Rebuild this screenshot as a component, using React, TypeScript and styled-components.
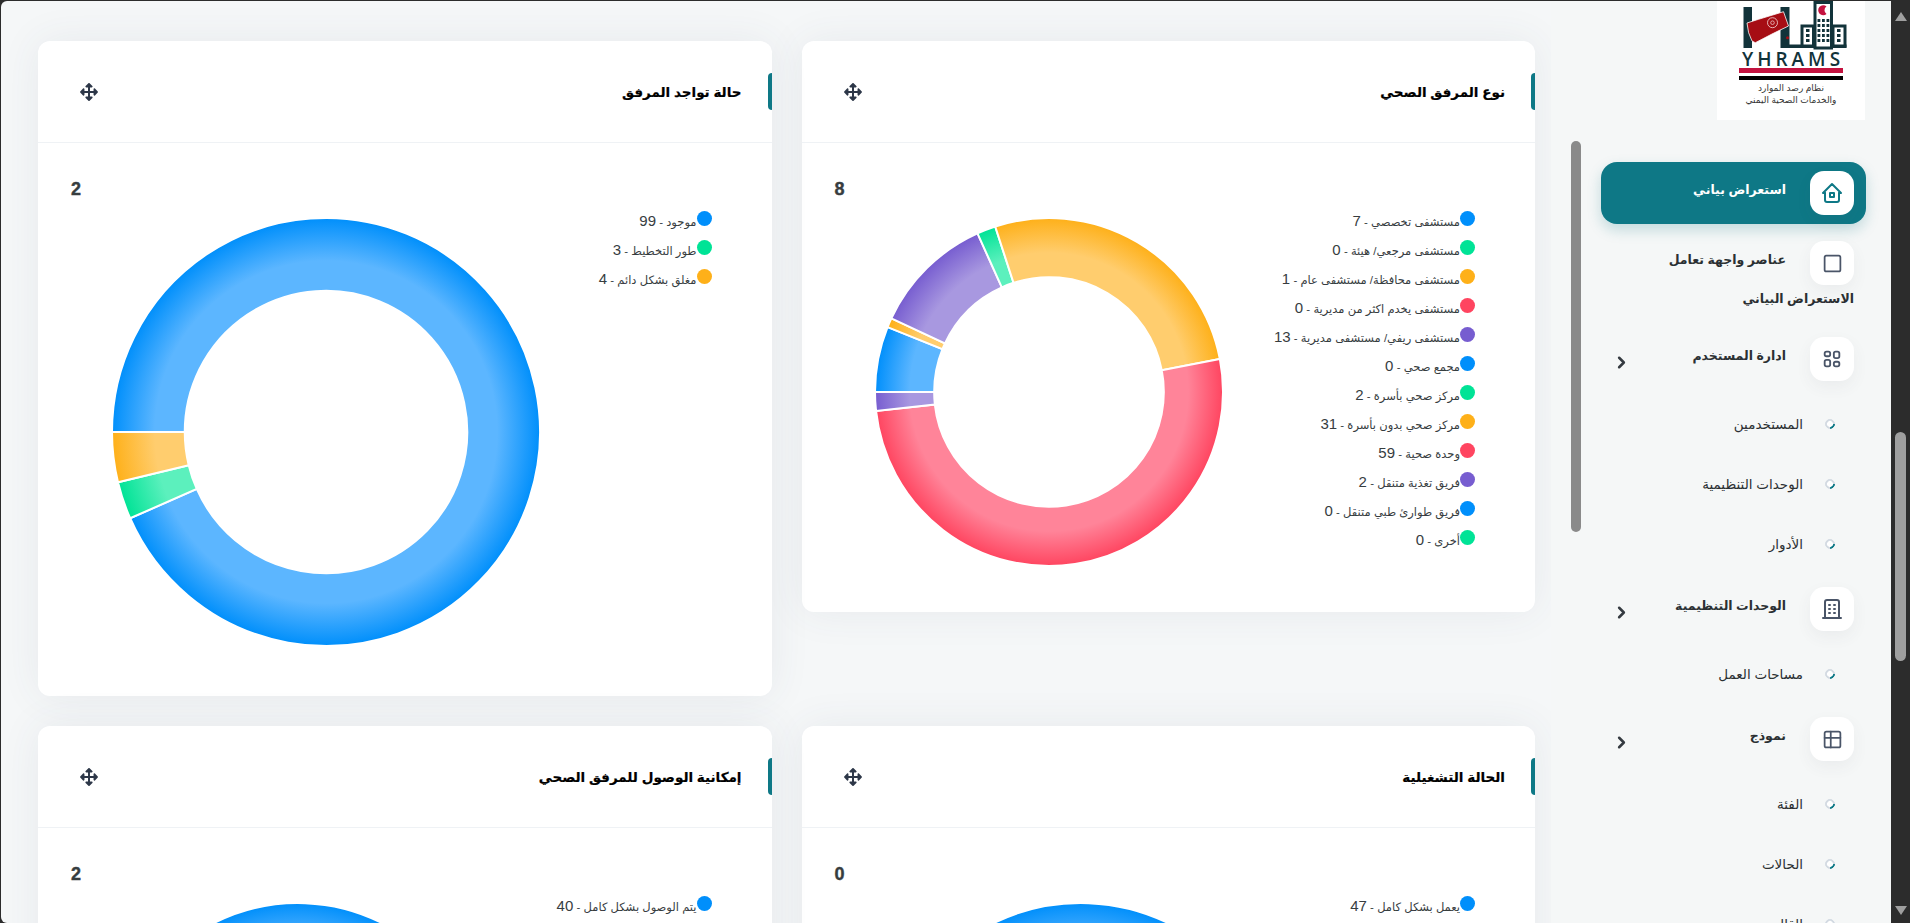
import React from "react";
import styled, { createGlobalStyle } from "styled-components";
import { FaArrowsAlt } from "react-icons/fa";
import { TbBuilding, TbChevronRight, TbHome2, TbLayout2, TbSquare, TbTable } from "react-icons/tb";

const GlobalStyle = createGlobalStyle`
  html, body { margin: 0; height: 100%; overflow: hidden; background: #2c2c2c; }
  body { font-family: "Liberation Sans", "DejaVu Sans", sans-serif; }
  * { box-sizing: border-box; }
`;

const COLORS: Record<string, { base: string; light: string }> = {
  blue: { base: "#008ffb", light: "#5cb6ff" },
  green: { base: "#00e396", light: "#5cf0bd" },
  orange: { base: "#feb019", light: "#ffcd6e" },
  red: { base: "#ff4560", light: "#ff8499" },
  purple: { base: "#775dd0", light: "#a898e0" },
};
const CYCLE = ["blue", "green", "orange", "red", "purple"];

type Entry = { label: string; value: number };
type ChartCard = { title: string; count: string; radius: number; inset: number; tail: number; entries: Entry[] };

const TYPE_ENTRIES: Entry[] = [
  { label: "مستشفى تخصصي", value: 7 },
  { label: "مستشفى مرجعي/ هيئة", value: 0 },
  { label: "مستشفى محافظة/ مستشفى عام", value: 1 },
  { label: "مستشفى يخدم اكثر من مديرية", value: 0 },
  { label: "مستشفى ريفي/ مستشفى مديرية", value: 13 },
  { label: "مجمع صحي", value: 0 },
  { label: "مركز صحي بأسرة", value: 2 },
  { label: "مركز صحي بدون بأسرة", value: 31 },
  { label: "وحدة صحية", value: 59 },
  { label: "فريق تغذية متنقل", value: 2 },
  { label: "فريق طوارئ طبي متنقل", value: 0 },
  { label: "أخرى", value: 0 },
];

const CARDS: ChartCard[] = [
  { title: "نوع المرفق الصحي", count: "8", radius: 174, inset: 39, tail: 45, entries: TYPE_ENTRIES },
  {
    title: "حالة تواجد المرفق",
    count: "2",
    radius: 214,
    inset: 40,
    tail: 49,
    entries: [
      { label: "موجود", value: 99 },
      { label: "طور التخطيط", value: 3 },
      { label: "مغلق بشكل دائم", value: 4 },
    ],
  },
  { title: "الحالة التشغيلية", count: "0", radius: 199, inset: 46, tail: 45, entries: [{ label: "يعمل بشكل كامل", value: 47 }] },
  { title: "إمكانية الوصول للمرفق الصحي", count: "2", radius: 186, inset: 40, tail: 45, entries: [{ label: "يتم الوصول بشكل كامل", value: 40 }] },
];

const Frame = styled.div`
  display: flex;
  height: 100vh;
  padding-top: 1px;
  overflow: hidden;
  background: #2c2c2c;
`;

const Workspace = styled.div`
  flex: 1;
  min-width: 0;
  display: flex;
  flex-direction: row-reverse;
  background: #f5f7f8;
  border-radius: 6px 0 0 6px;
  margin-left: 1px;
  overflow: hidden;
`;

const Sidebar = styled.aside`
  position: relative;
  width: 340px;
  flex-shrink: 0;
  padding: 0 25px 0 50px;
  background: #f5f7f7;
`;

const SidebarThumb = styled.div`
  position: absolute;
  left: 20px;
  top: 140px;
  width: 10px;
  height: 391px;
  border-radius: 5px;
  background: #8a8a8a;
`;

const LogoBox = styled.div`
  width: 148px;
  height: 119px;
  margin: 0 1px 38px auto;
  background: #fff;
  display: flex;
  flex-direction: column;
  align-items: center;
`;

const LogoArt = styled.svg`
  display: block;
  flex-shrink: 0;
  width: 148px;
  height: 50px;
`;

const LogoName = styled.div`
  font-family: "Open Sans", sans-serif;
  font-size: 19px;
  line-height: 16px;
  font-weight: 600;
  letter-spacing: 4px;
  margin-right: -4px;
  color: #12333a;
`;

const LogoBars = styled.div`
  width: 104px;
  height: 12px;
  margin-top: 1px;
  border-top: 5px solid #c4123f;
  border-bottom: 4px solid #000;
`;

const LogoCaption = styled.div`
  direction: rtl;
  margin-top: 2px;
  text-align: center;
  font-size: 9px;
  line-height: 12px;
  color: #333;
`;

const Nav = styled.nav`
  display: flex;
  flex-direction: column;
  direction: rtl;
`;

const NavRow = styled.div<{ $active?: boolean }>`
  display: flex;
  align-items: center;
  height: 62px;
  margin: 4px 0;
  padding: 0 12px;
  gap: 24px;
  border-radius: 16px;
  background: ${(p) => (p.$active ? "#0e7886" : "transparent")};
  color: ${(p) => (p.$active ? "#fff" : "#2b3033")};
  box-shadow: ${(p) => (p.$active ? "0 6px 14px rgba(14, 120, 134, 0.22)" : "none")};
`;

const NavIcon = styled.span<{ $active?: boolean }>`
  width: 44px;
  height: 44px;
  flex-shrink: 0;
  display: flex;
  align-items: center;
  justify-content: center;
  border-radius: 14px;
  background: #fff;
  color: ${(p) => (p.$active ? "#0e7886" : "#4a5568")};
  box-shadow: 0 6px 16px rgba(60, 70, 80, 0.06);
`;

const NavLabel = styled.span`
  flex: 1;
  font-size: 12.5px;
  font-weight: 700;
  margin-top: -8px;
`;

const NavChevron = styled.span`
  display: flex;
  margin-left: -1px;
  margin-top: 6px;
  color: #343a40;
`;

const NavHeading = styled.div`
  height: 36px;
  margin-top: -10px;
  padding: 3px 12px 0 0;
  font-size: 12.5px;
  line-height: 16px;
  font-weight: 700;
  color: #2b3033;
`;

const SubRow = styled.div`
  display: flex;
  align-items: center;
  height: 60px;
  padding-right: 31px;
  gap: 22px;
  font-size: 13.5px;
  color: #2b3033;
`;

const SubDot = styled.span`
  width: 10px;
  height: 10px;
  flex-shrink: 0;
  border-radius: 50%;
  background: #fff;
  border: 2px solid #d3dae2;
  border-bottom-color: #0e7886;
  transform: rotate(-45deg);
`;

const Main = styled.main`
  flex: 1;
  min-width: 0;
  display: grid;
  direction: rtl;
  grid-template-columns: 1fr 1fr;
  grid-auto-rows: max-content;
  align-items: start;
  gap: 30px;
  padding: 40px 16px 0 37px;
`;

const Card = styled.section`
  background: #fff;
  border-radius: 12px;
  box-shadow: 0 0 40px rgba(70, 80, 100, 0.08);
  overflow: hidden;
`;

const CardHeader = styled.header`
  position: relative;
  height: 102px;
  display: flex;
  align-items: center;
  justify-content: space-between;
  padding: 0 30px 0 42px;
  border-bottom: 1px solid #eff2f5;
  &::before {
    content: "";
    position: absolute;
    right: 0;
    top: 32px;
    width: 4px;
    height: 37px;
    border-radius: 4px 0 0 4px;
    background: #0e7886;
  }
`;

const CardTitle = styled.h3`
  margin: 0;
  font-size: 13.5px;
  font-weight: 700;
  color: #000;
  -webkit-text-stroke: 0.2px #000;
`;

const MoveHandle = styled.span`
  display: flex;
  color: #2d3748;
`;

const CardBody = styled.div<{ $tail: number }>`
  direction: ltr;
  padding: 35px 60px ${(p) => p.$tail}px 33px;
`;

const Count = styled.div`
  height: 39px;
  font-size: 18px;
  line-height: 22px;
  font-weight: 700;
  color: #373d3f;
  -webkit-text-stroke: 0.4px #373d3f;
`;

const ChartRow = styled.div<{ $inset: number }>`
  display: flex;
  justify-content: space-between;
  align-items: flex-start;
  padding-left: ${(p) => p.$inset}px;
`;

const DonutSvg = styled.svg`
  display: block;
  flex-shrink: 0;
`;

const Legend = styled.ul`
  direction: rtl;
  list-style: none;
  margin: -13px 0 0;
  padding: 0;
`;

const LegendRow = styled.li`
  display: flex;
  align-items: center;
  height: 29px;
  font-size: 11.5px;
  color: #373d3f;
`;

const LegendDot = styled.span<{ $color: string }>`
  width: 15px;
  height: 15px;
  flex-shrink: 0;
  border-radius: 50%;
  background: ${(p) => p.$color};
`;

const LegendText = styled.span`
  margin-top: 4px;
`;

const LegendValue = styled.span`
  font-size: 15px;
`;

const PageBar = styled.div`
  width: 19px;
  flex-shrink: 0;
  display: flex;
  flex-direction: column;
  align-items: center;
  padding: 11px 0 8px;
`;

const PageArrow = styled.span<{ $down?: boolean }>`
  width: 0;
  height: 0;
  border-left: 6px solid transparent;
  border-right: 6px solid transparent;
  ${(p) => (p.$down ? "border-top: 9px solid #9f9f9f; margin-top: auto;" : "border-bottom: 9px solid #9f9f9f;")}
`;

const PageThumb = styled.div`
  width: 11px;
  height: 229px;
  margin-top: 411px;
  border-radius: 6px;
  background: #9f9f9f;
`;

const point = (cx: number, cy: number, r: number, deg: number) => {
  const a = ((deg - 90) * Math.PI) / 180;
  return `${(cx + r * Math.cos(a)).toFixed(2)} ${(cy + r * Math.sin(a)).toFixed(2)}`;
};

const slicePath = (c: number, r: number, inner: number, from: number, to: number) => {
  const end = Math.min(to, from + 359.99);
  const large = end - from > 180 ? 1 : 0;
  return [
    `M ${point(c, c, r, from)}`,
    `A ${r} ${r} 0 ${large} 1 ${point(c, c, r, end)}`,
    `L ${point(c, c, inner, end)}`,
    `A ${inner} ${inner} 0 ${large} 0 ${point(c, c, inner, from)}`,
    "Z",
  ].join(" ");
};

const Donut = ({ id, radius, entries }: { id: string; radius: number; entries: Entry[] }) => {
  const total = entries.reduce((sum, e) => sum + e.value, 0);
  const c = radius + 1;
  let angle = 270;
  return (
    <DonutSvg width={c * 2} height={c * 2} viewBox={`0 0 ${c * 2} ${c * 2}`}>
      <defs>
        {CYCLE.map((name) => (
          <radialGradient key={name} id={`${id}-${name}`} gradientUnits="userSpaceOnUse" cx={c} cy={c} r={radius}>
            <stop offset="0.8" stopColor={COLORS[name].light} />
            <stop offset="1" stopColor={COLORS[name].base} />
          </radialGradient>
        ))}
      </defs>
      {entries.map((e, i) => {
        if (e.value === 0) return null;
        const sweep = (e.value / total) * 360;
        const from = angle;
        angle += sweep;
        return (
          <path
            key={e.label}
            d={slicePath(c, radius, radius * 0.66, from, from + sweep)}
            fill={`url(#${id}-${CYCLE[i % 5]})`}
            stroke="#fff"
            strokeWidth={2}
          />
        );
      })}
    </DonutSvg>
  );
};

const Logo = () => (
  <LogoBox>
    <LogoArt viewBox="0 0 148 50">
      <path d="M26.500 6h8.500v41h-8.500zM63.500 6h9v37.500h57v3.500H63.500z" fill="#12333a" />
      <path d="M98 47V1.500h16.500V47zM116 25h12v20h-12zM85 25h11.500v20H85z" fill="#fff" stroke="#12333a" strokeWidth="3" />
      <path
        d="M30 22l11.500-3.700 25-7.600 5 14.300-16.500 8-16.700 8.700-3.300-1.700-3.400-8.300z"
        fill="#a60d14"
        stroke="#fff"
        strokeWidth="0.8"
      />
      <circle cx="55.500" cy="21.700" r="5" fill="none" stroke="#f3d9d9" strokeWidth="0.8" />
      <circle cx="55.500" cy="21.700" r="1.800" fill="none" stroke="#f3d9d9" strokeWidth="0.7" />
      <circle cx="70.500" cy="36.700" r="1.500" fill="#a60d14" />
      <path d="M109.500 5.500a5 5 0 1 0 0 7.500a4.500 4.500 0 0 1 0-7.500z" fill="#c4123f" />
      {[0, 1, 2, 3, 4].map((row) =>
        [0, 1, 2].map((col) => (
          <rect key={`${row}-${col}`} x={100.500 + col * 4.500} y={18 + row * 5} width="2.800" height="3" fill="#12333a" />
        ))
      )}
      {[0, 1, 2].map((row) => (
        <React.Fragment key={row}>
          <rect x="89" y={28 + row * 5} width="3.500" height="3" fill="#12333a" />
          <rect x="120" y={28 + row * 5} width="3.500" height="3" fill="#12333a" />
        </React.Fragment>
      ))}
    </LogoArt>
    <LogoName>YHRAMS</LogoName>
    <LogoBars />
    <LogoCaption>
      نظام رصد الموارد
      <br />
      والخدمات الصحية اليمني
    </LogoCaption>
  </LogoBox>
);

const Chevron = () => (
  <NavChevron>
    <TbChevronRight size={19} strokeWidth={3.2} />
  </NavChevron>
);

const ChartPanel = ({ card, id }: { card: ChartCard; id: string }) => (
  <Card>
    <CardHeader>
      <CardTitle>{card.title}</CardTitle>
      <MoveHandle>
        <FaArrowsAlt size={18} />
      </MoveHandle>
    </CardHeader>
    <CardBody $tail={card.tail}>
      <Count>{card.count}</Count>
      <ChartRow $inset={card.inset}>
        <Donut id={id} radius={card.radius} entries={card.entries} />
        <Legend>
          {card.entries.map((e, i) => (
            <LegendRow key={e.label}>
              <LegendDot $color={COLORS[CYCLE[i % 5]].base} />
              <LegendText>
                {e.label} - <LegendValue>{e.value}</LegendValue>
              </LegendText>
            </LegendRow>
          ))}
        </Legend>
      </ChartRow>
    </CardBody>
  </Card>
);

const App = () => (
  <Frame>
    <GlobalStyle />
    <Workspace>
      <Sidebar>
        <SidebarThumb />
        <Logo />
        <Nav>
          <NavRow $active>
            <NavIcon $active>
              <TbHome2 size={24} />
            </NavIcon>
            <NavLabel>استعراض بياني</NavLabel>
          </NavRow>
          <NavRow>
            <NavIcon>
              <TbSquare size={21} />
            </NavIcon>
            <NavLabel>عناصر واجهة تعامل</NavLabel>
          </NavRow>
          <NavHeading>الاستعراض البياني</NavHeading>
          <NavRow>
            <NavIcon>
              <TbLayout2 size={22} />
            </NavIcon>
            <NavLabel>ادارة المستخدم</NavLabel>
            <Chevron />
          </NavRow>
          <SubRow>
            <SubDot />
            المستخدمين
          </SubRow>
          <SubRow>
            <SubDot />
            الوحدات التنظيمية
          </SubRow>
          <SubRow>
            <SubDot />
            الأدوار
          </SubRow>
          <NavRow>
            <NavIcon>
              <TbBuilding size={24} />
            </NavIcon>
            <NavLabel>الوحدات التنظيمية</NavLabel>
            <Chevron />
          </NavRow>
          <SubRow>
            <SubDot />
            مساحات العمل
          </SubRow>
          <NavRow>
            <NavIcon>
              <TbTable size={21} />
            </NavIcon>
            <NavLabel>نموذج</NavLabel>
            <Chevron />
          </NavRow>
          <SubRow>
            <SubDot />
            الفئة
          </SubRow>
          <SubRow>
            <SubDot />
            الحالات
          </SubRow>
          <SubRow>
            <SubDot />
            القالب
          </SubRow>
        </Nav>
      </Sidebar>
      <Main>
        {CARDS.map((card, i) => (
          <ChartPanel key={card.title} card={card} id={`donut-${i}`} />
        ))}
      </Main>
    </Workspace>
    <PageBar>
      <PageArrow />
      <PageThumb />
      <PageArrow $down />
    </PageBar>
  </Frame>
);

export default App;
